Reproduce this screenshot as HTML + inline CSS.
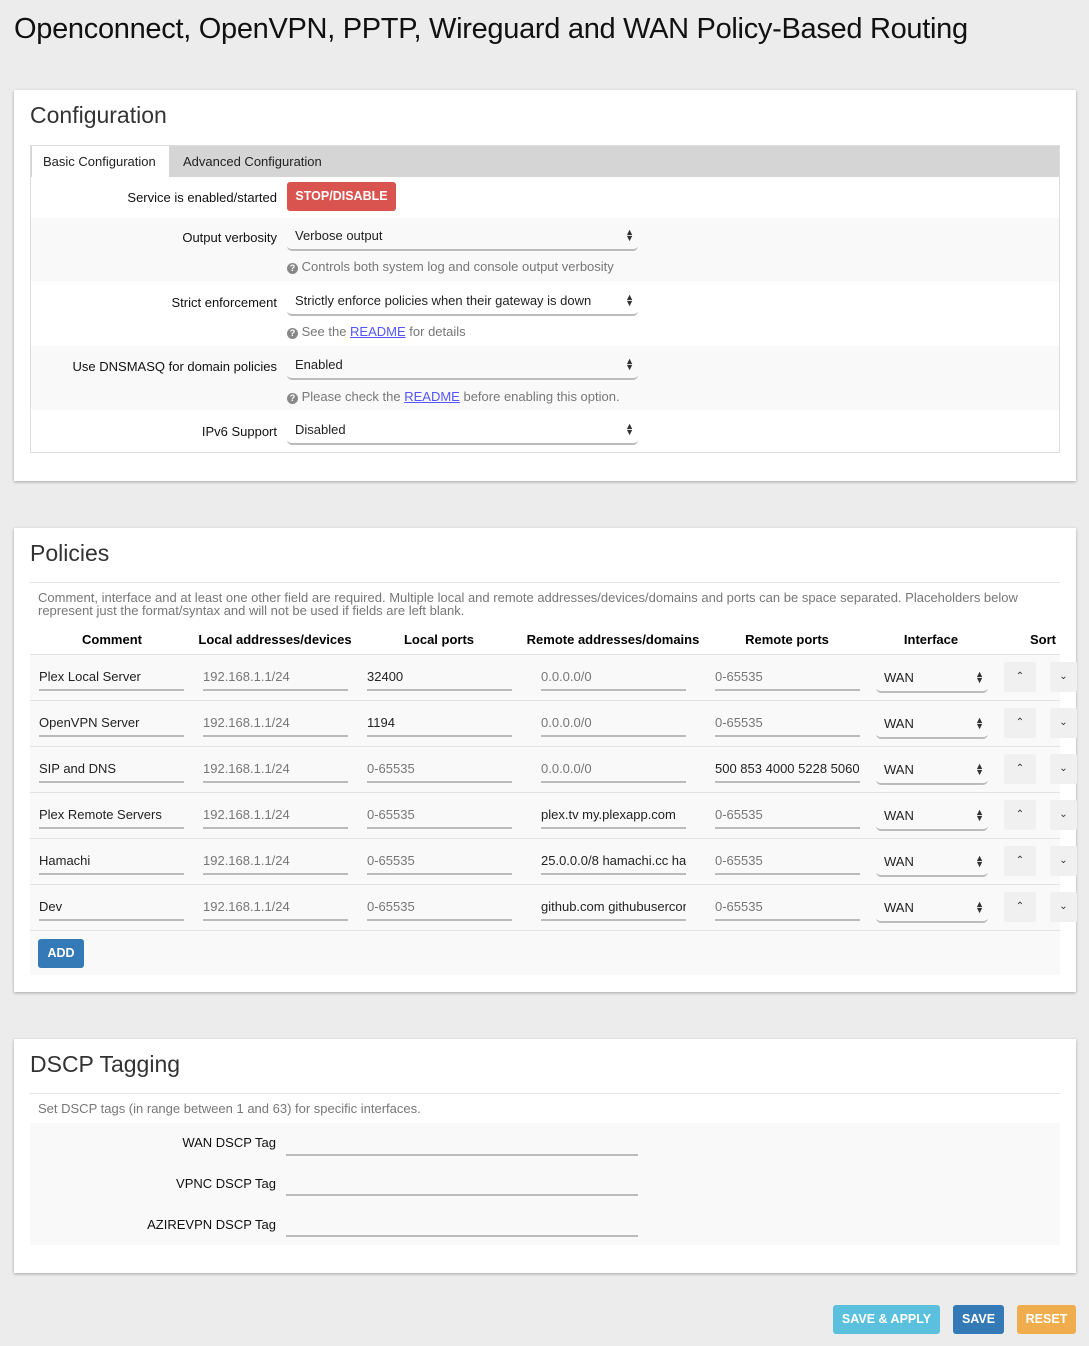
<!DOCTYPE html>
<html><head><meta charset="utf-8"><style>
*{box-sizing:border-box;margin:0;padding:0}
body{width:1089px;height:1346px;background:#ececec;font-family:"Liberation Sans",sans-serif;color:#000;position:relative;overflow:hidden;font-size:13px}
.a{position:absolute}
h1{position:absolute;left:14px;top:13px;font-size:29px;font-weight:normal;color:#111;white-space:nowrap;letter-spacing:-0.3px}
.panel{position:absolute;left:14px;width:1062px;background:#fff;box-shadow:0 1px 3px rgba(0,0,0,.3)}
.ptitle{position:absolute;left:16px;font-size:23px;color:#333}
.lbl{position:absolute;text-align:right;width:260px;font-size:13px;color:#111}
.sel{position:absolute;height:30px;border-bottom:2px solid #bbb;border-radius:0 0 5px 5px;font-size:13px;color:#222;padding:7px 8px 0;white-space:nowrap;overflow:hidden}
.sel .arr{position:absolute;right:4px;top:8px;font-size:9px;line-height:6px;color:#333}
.help{position:absolute;font-size:13px;color:#777}
.help a{color:#55f;text-decoration:underline}
.q{display:inline-block;width:11px;height:11px;border-radius:50%;background:#888;color:#fff;font-size:9px;text-align:center;line-height:11px;font-weight:bold;vertical-align:0}
.inp{position:absolute;height:27px;border-bottom:2px solid #bbb;font-size:13px;color:#222;padding:5px 0 0 0;white-space:nowrap;overflow:hidden}
.ph{color:#777}
.btn{position:absolute;color:#fff;font-weight:bold;font-size:12.5px;text-align:center;border-radius:3px}
.th{position:absolute;top:632px;font-weight:bold;font-size:13px;transform:translateX(-50%);white-space:nowrap}
.sb{position:absolute;width:32px;height:30px;background:#f0f0f0;border-radius:2px;font-size:10px;text-align:center;line-height:30px;color:#333}
</style></head><body>
<h1>Openconnect, OpenVPN, PPTP, Wireguard and WAN Policy-Based Routing</h1>

<div class="panel" style="top:90px;height:391px"></div>
<div class="a ptitle" style="left:30px;top:102px">Configuration</div>
<div class="a" style="left:30px;top:145px;width:1030px;height:308px;border:1px solid #ddd;background:#fff"></div>
<div class="a" style="left:31px;top:146px;width:1028px;height:31px;background:#d5d5d5"></div>
<div class="a" style="left:32px;top:146px;width:137px;height:31px;background:#fff"></div>
<div class="a" style="left:43px;top:154px;font-size:13px;color:#222">Basic Configuration</div>
<div class="a" style="left:183px;top:154px;font-size:13px;color:#222">Advanced Configuration</div>
<div class="a" style="left:31px;top:218px;width:1028px;height:63px;background:#f9f9f9"></div>
<div class="a" style="left:31px;top:346px;width:1028px;height:64px;background:#f9f9f9"></div>
<div class="lbl" style="left:17px;top:190px">Service is enabled/started</div>
<div class="btn" style="left:287px;top:182px;width:109px;height:29px;background:#d9534f;line-height:29px">STOP/DISABLE</div>
<div class="lbl" style="left:17px;top:230px">Output verbosity</div>
<div class="sel" style="left:287px;top:221px;width:351px">Verbose output<span class="arr">▲<br>▼</span></div>
<div class="help" style="left:287px;top:259px"><span class="q">?</span> Controls both system log and console output verbosity</div>
<div class="lbl" style="left:17px;top:295px">Strict enforcement</div>
<div class="sel" style="left:287px;top:286px;width:351px">Strictly enforce policies when their gateway is down<span class="arr">▲<br>▼</span></div>
<div class="help" style="left:287px;top:324px"><span class="q">?</span> See the <a>README</a> for details</div>
<div class="lbl" style="left:17px;top:359px">Use DNSMASQ for domain policies</div>
<div class="sel" style="left:287px;top:350px;width:351px">Enabled<span class="arr">▲<br>▼</span></div>
<div class="help" style="left:287px;top:389px"><span class="q">?</span> Please check the <a>README</a> before enabling this option.</div>
<div class="lbl" style="left:17px;top:424px">IPv6 Support</div>
<div class="sel" style="left:287px;top:415px;width:351px">Disabled<span class="arr">▲<br>▼</span></div>

<div class="panel" style="top:528px;height:464px"></div>
<div class="a ptitle" style="left:30px;top:540px">Policies</div>
<div class="a" style="left:30px;top:582px;width:1030px;height:1px;background:#e5e5e5"></div>
<div class="a" style="left:38px;top:591px;width:1010px;font-size:13px;color:#777;line-height:13px">Comment, interface and at least one other field are required. Multiple local and remote addresses/devices/domains and ports can be space separated. Placeholders below represent just the format/syntax and will not be used if fields are left blank.</div>
<div class="th" style="left:112px">Comment</div>
<div class="th" style="left:275px">Local addresses/devices</div>
<div class="th" style="left:439px">Local ports</div>
<div class="th" style="left:613px">Remote addresses/domains</div>
<div class="th" style="left:787px">Remote ports</div>
<div class="th" style="left:931px">Interface</div>
<div class="th" style="left:1043px">Sort</div>
<div class="a" style="left:30px;top:654px;width:1030px;height:321px;background:#f9f9f9"></div>
<div id="rows"></div>
<div class="btn" style="left:38px;top:939px;width:46px;height:29px;background:#337ab7;line-height:29px">ADD</div>

<div class="panel" style="top:1039px;height:234px"></div>
<div class="a ptitle" style="left:30px;top:1051px">DSCP Tagging</div>
<div class="a" style="left:30px;top:1093px;width:1030px;height:1px;background:#e5e5e5"></div>
<div class="a" style="left:38px;top:1101px;font-size:13px;color:#777">Set DSCP tags (in range between 1 and 63) for specific interfaces.</div>
<div class="a" style="left:30px;top:1123px;width:1030px;height:122px;background:#f9f9f9"></div>
<div class="lbl" style="left:16px;top:1135px">WAN DSCP Tag</div>
<div class="lbl" style="left:16px;top:1176px">VPNC DSCP Tag</div>
<div class="lbl" style="left:16px;top:1217px">AZIREVPN DSCP Tag</div>
<div class="a" style="left:286px;top:1154px;width:352px;height:2px;background:#bbb"></div>
<div class="a" style="left:286px;top:1194px;width:352px;height:2px;background:#bbb"></div>
<div class="a" style="left:286px;top:1235px;width:352px;height:2px;background:#bbb"></div>

<div class="btn" style="left:833px;top:1305px;width:107px;height:29px;background:#5bc0de;line-height:29px">SAVE &amp; APPLY</div>
<div class="btn" style="left:953px;top:1305px;width:51px;height:29px;background:#337ab7;line-height:29px">SAVE</div>
<div class="btn" style="left:1017px;top:1305px;width:59px;height:29px;background:#f0ad4e;line-height:29px">RESET</div>

<script>
var d=[["Plex Local Server","32400","0.0.0.0/0",1,"0-65535",1],["OpenVPN Server","1194","0.0.0.0/0",1,"0-65535",1],["SIP and DNS","0-65535","0.0.0.0/0",1,"500 853 4000 5228 5060",0],["Plex Remote Servers","0-65535","plex.tv my.plexapp.com",0,"0-65535",1],["Hamachi","0-65535","25.0.0.0/8 hamachi.cc hamachi.com",0,"0-65535",1],["Dev","0-65535","github.com githubusercontent.com",0,"0-65535",1]];
var h="";d.forEach(function(r,i){var y=654+i*46;
h+='<div class="a" style="left:30px;top:'+(y)+'px;width:1030px;height:1px;background:#e3e3e3"></div>';
var t=y+10;
h+='<div class="inp" style="left:39px;top:'+t+'px;width:145px">'+r[0]+'</div>';
h+='<div class="inp ph" style="left:203px;top:'+t+'px;width:145px">192.168.1.1/24</div>';
h+='<div class="inp'+(r[1]=="0-65535"?' ph':'')+'" style="left:367px;top:'+t+'px;width:145px">'+r[1]+'</div>';
h+='<div class="inp'+(r[3]?' ph':'')+'" style="left:541px;top:'+t+'px;width:145px">'+r[2]+'</div>';
h+='<div class="inp'+(r[5]?' ph':'')+'" style="left:715px;top:'+t+'px;width:145px">'+r[4]+'</div>';
h+='<div class="sel" style="left:876px;top:'+(t-1)+'px;width:112px;height:30px">WAN<span class="arr">▲<br>▼</span></div>';
h+='<div class="sb" style="left:1004px;top:'+(y+8)+'px">&#8963;</div><div class="sb" style="left:1050px;top:'+(y+8)+'px;width:27px">&#8964;</div>';
});
h+='<div class="a" style="left:30px;top:930px;width:1030px;height:1px;background:#e3e3e3"></div>';
document.getElementById("rows").innerHTML=h;
</script>
</body></html>
